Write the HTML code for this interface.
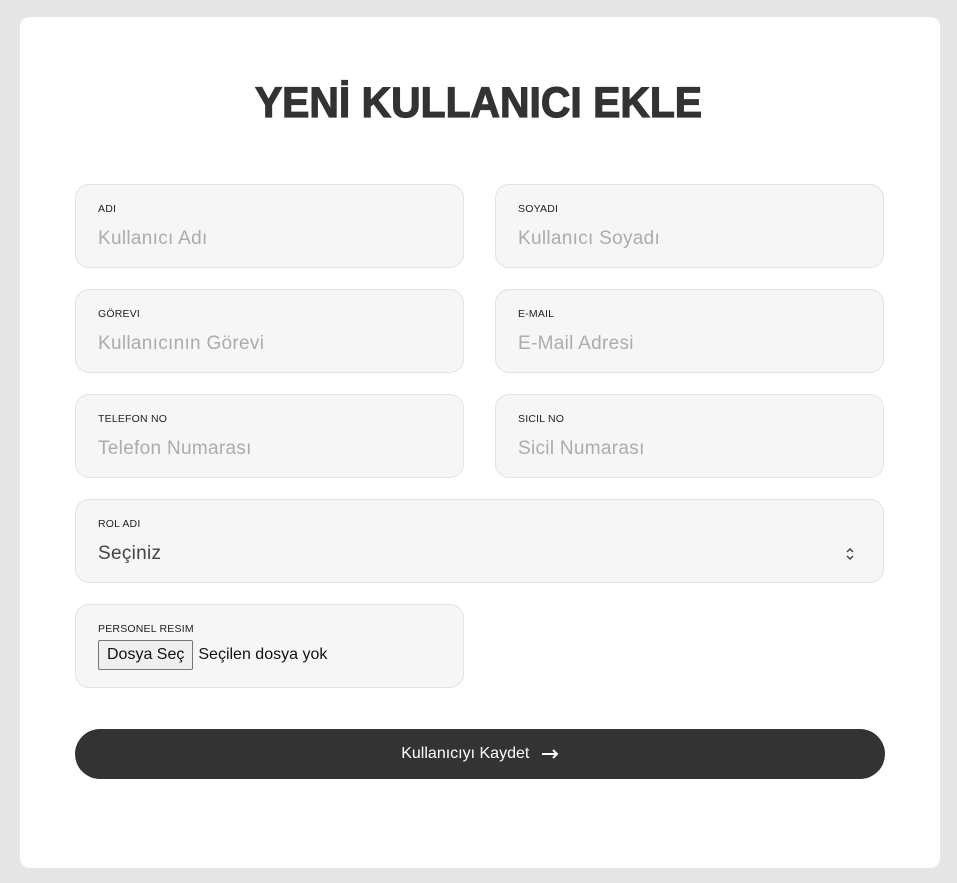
<!DOCTYPE html>
<html><head><meta charset="utf-8"><style>
body{margin:0;background:#e6e6e6;width:957px;height:883px;font-family:"Liberation Sans",sans-serif;position:relative;overflow:hidden}
.card{position:absolute;left:20px;top:17px;width:920px;height:851px;background:#fff;border-radius:10px}
h1{position:absolute;left:0;width:957px;top:80px;margin:0;text-align:center;font-size:43px;font-weight:900;color:#333;line-height:46px;-webkit-text-stroke:1.2px #333;transform:scaleX(0.95)}
.f{position:absolute;width:387px;height:82px;background:#f6f6f6;border:1px solid #e3e3e3;border-radius:14px}
.f .l{position:absolute;left:22px;top:18px;font-size:10.5px;color:#222;letter-spacing:.2px}
.f .p{position:absolute;left:22px;top:43px;font-size:19px;color:#acacac;letter-spacing:.3px}
.btn{position:absolute;left:75px;top:729px;width:810px;height:50px;background:#333;border-radius:25px;color:#fff;font-size:16px;text-align:center;line-height:50px}
</style></head><body>
<div class="card"></div>
<h1>YENİ KULLANICI EKLE</h1>
<div class="f" style="left:75px;top:184px"><div class="l">ADI</div><div class="p">Kullanıcı Adı</div></div>
<div class="f" style="left:495px;top:184px"><div class="l">SOYADI</div><div class="p">Kullanıcı Soyadı</div></div>
<div class="f" style="left:75px;top:289px"><div class="l">GÖREVI</div><div class="p">Kullanıcının Görevi</div></div>
<div class="f" style="left:495px;top:289px"><div class="l">E-MAIL</div><div class="p">E-Mail Adresi</div></div>
<div class="f" style="left:75px;top:394px"><div class="l">TELEFON NO</div><div class="p">Telefon Numarası</div></div>
<div class="f" style="left:495px;top:394px"><div class="l">SICIL NO</div><div class="p">Sicil Numarası</div></div>
<div class="f" style="left:75px;top:499px;width:807px"><div class="l">ROL ADI</div><div class="p" style="color:#444">Seçiniz</div>
<svg style="position:absolute;left:769px;top:47px" width="10" height="14" viewBox="0 0 10 14"><path d="M2 5L5 2L8 5M2 9L5 12L8 9" fill="none" stroke="#444" stroke-width="1.5"/></svg></div>
<div class="f" style="left:75px;top:604px"><div class="l">PERSONEL RESIM</div>
<div style="position:absolute;left:22px;top:35px;font-size:16px;color:#111;display:flex;align-items:center"><span style="border:1px solid #777;background:#efefef;border-radius:2px;padding:4px 8px;height:20px;line-height:20px">Dosya Seç</span><span style="margin-left:5px">Seçilen dosya yok</span></div></div>
<div class="btn">Kullanıcıyı Kaydet <svg style="margin-left:8px;vertical-align:middle" width="17" height="10" viewBox="0 0 17 10"><path d="M0 5H15M11 1L15 5L11 9" fill="none" stroke="#fff" stroke-width="2"/></svg></div>
</body></html>
